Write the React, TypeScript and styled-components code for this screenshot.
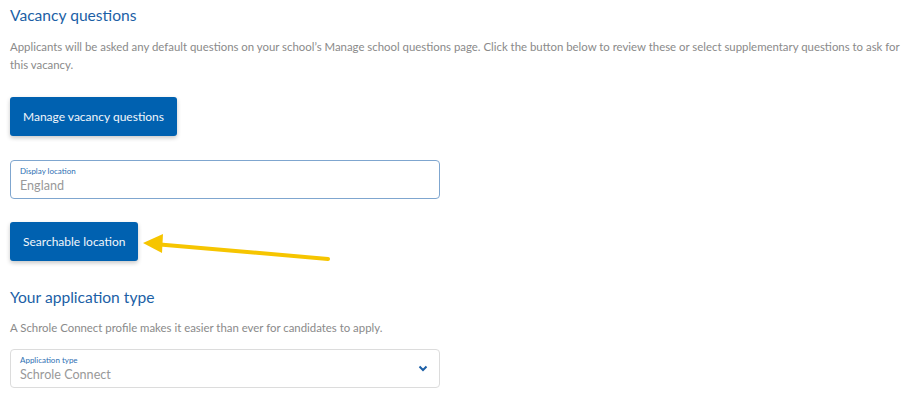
import React from "react";
import styled, { createGlobalStyle } from "styled-components";

const Global = createGlobalStyle`
  body {
    margin: 0;
    background: #ffffff;
    font-family: Lato, "Open Sans", sans-serif;
  }
`;

const Page = styled.div`
  position: relative;
  width: 902px;
  height: 398px;
  overflow: hidden;
  padding: 4px 2px 0 10px;
  box-sizing: border-box;
`;

const Heading = styled.h2<{ $top?: number }>`
  margin: ${(p) => p.$top ?? 0}px 0 0 0;
  font-size: 15.6px;
  line-height: 22px;
  font-weight: 400;
  color: #1c5fa6;
`;

const Text = styled.p<{ $top: number }>`
  margin: ${(p) => p.$top}px 0 0 0;
  font-size: 11.4px;
  line-height: 18px;
  color: #8a8a8a;
`;

const Button = styled.button<{ $top: number }>`
  display: block;
  margin-top: ${(p) => p.$top}px;
  height: 39px;
  padding: 0 13px;
  border: none;
  border-radius: 3px;
  background: #0061b0;
  color: #f2f6fb;
  font-family: Lato, "Open Sans", sans-serif;
  font-size: 12px;
  box-shadow: 0 2px 4px rgba(0, 0, 0, 0.22);
`;

const Field = styled.div<{ $top: number; $focus?: boolean }>`
  position: relative;
  margin-top: ${(p) => p.$top}px;
  width: 430px;
  height: 39px;
  box-sizing: border-box;
  border: 1px solid ${(p) => (p.$focus ? "#7fa6cf" : "#dcdcdc")};
  border-radius: 4px;
  padding: 5px 9px 0 9px;
  display: flex;
  flex-direction: column;
`;

const Label = styled.span`
  font-size: 8px;
  line-height: 10px;
  color: #2e6fb3;
`;

const Value = styled.span`
  margin-top: 1px;
  font-size: 12.6px;
  line-height: 17px;
  color: #999999;
`;

const Chevron = styled.svg`
  position: absolute;
  right: 11px;
  top: 15px;
`;

const Arrow = styled.svg`
  position: absolute;
  left: 0;
  top: 0;
  pointer-events: none;
`;

export default function App() {
  return (
    <>
      <Global />
      <Page>
        <Heading>Vacancy questions</Heading>
        <Text $top={12}>
          Applicants will be asked any default questions on your school’s Manage school questions
          page. Click the button below to review these or select supplementary questions to ask for
          this vacancy.
        </Text>
        <Button $top={23}>Manage vacancy questions</Button>
        <Field $top={24} $focus>
          <Label>Display location</Label>
          <Value>England</Value>
        </Field>
        <Button $top={23}>Searchable location</Button>
        <Heading $top={25}>Your application type</Heading>
        <Text $top={11}>A Schrole Connect profile makes it easier than ever for candidates to apply.</Text>
        <Field $top={12}>
          <Label>Application type</Label>
          <Value>Schrole Connect</Value>
          <Chevron width="10" height="7" viewBox="0 0 10 7">
            <path d="M1.5 1.5 L5 5 L8.5 1.5" fill="none" stroke="#1c5fa6" strokeWidth="2" />
          </Chevron>
        </Field>
        <Arrow width="902" height="398" viewBox="0 0 902 398">
          <line x1="160" y1="244.5" x2="328" y2="259" stroke="#f6c500" strokeWidth="4" strokeLinecap="round" />
          <polygon points="143,243 163,234 162,253" fill="#f6c500" />
        </Arrow>
      </Page>
    </>
  );
}
